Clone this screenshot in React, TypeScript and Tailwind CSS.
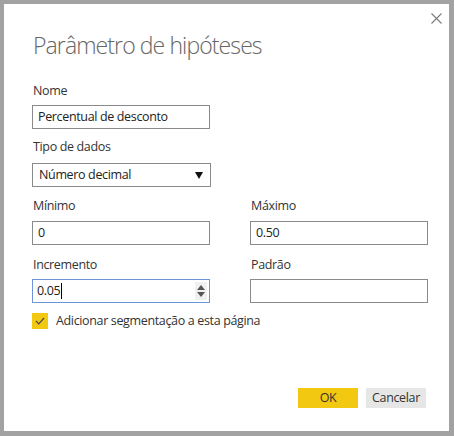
import React from "react";

const font = { fontFamily: '"Open Sans", "Noto Sans", sans-serif' };

function Label({ children, className = "" }: { children: React.ReactNode; className?: string }) {
  return (
    <div className={`text-[12.5px] leading-[16px] tracking-[-0.35px] text-[#333333] ${className}`}>{children}</div>
  );
}

const box = "h-[24px] border border-[#8a8a8a] flex items-center text-[12.5px] tracking-[-0.35px] text-[#222222]";

export default function App() {
  return (
    <div
      className="w-[454px] h-[436px] bg-[#a2a2a2] pt-[4px] pl-[4px] pr-[5px] pb-[5px]"
      style={font}
    >
      <div className="relative w-full h-full bg-white flex flex-col pl-[28px] pr-[23px]">
        <button className="absolute right-[7px] top-[8px] w-[12px] h-[12px] flex items-center justify-center">
          <svg width="11" height="11" viewBox="0 0 11 11">
            <path d="M0.5 0.5 L10.5 10.5 M10.5 0.5 L0.5 10.5" stroke="#7a7a7a" strokeWidth="1.1" />
          </svg>
        </button>

        <h1 className="mt-[25px] text-[23px] leading-[32px] tracking-[-0.9px] font-light text-[#666666] ml-[1px]">
          Parâmetro de hipóteses
        </h1>

        <Label className="mt-[22px] ml-[1px]">Nome</Label>
        <div className={`mt-[6px] w-[178px] px-[5px] ${box}`}>Percentual de desconto</div>

        <Label className="mt-[10px] ml-[1px]">Tipo de dados</Label>
        <div className={`mt-[8px] w-[179px] justify-between pl-[6px] pr-[7px] ${box}`}>
          <span>Número decimal</span>
          <svg width="8" height="7" viewBox="0 0 8 7">
            <path d="M0 0 H8 L4 7 Z" fill="#111111" />
          </svg>
        </div>

        <div className="mt-[11px] flex gap-[40px]">
          <div className="flex flex-col">
            <Label className="ml-[1px]">Mínimo</Label>
            <div className={`mt-[7px] w-[178px] px-[5px] ${box}`}>0</div>
          </div>
          <div className="flex flex-col">
            <Label className="ml-[1px]">Máximo</Label>
            <div className={`mt-[7px] w-[178px] px-[5px] ${box}`}>0.50</div>
          </div>
        </div>

        <div className="mt-[12px] flex gap-[40px]">
          <div className="flex flex-col">
            <Label className="ml-[1px]">Incremento</Label>
            <div className="mt-[6px] w-[178px] h-[24px] border border-[#6e95d8] flex items-center justify-between pl-[4px] pr-[2px] text-[12.5px] tracking-[-0.35px] text-[#222222]">
              <span className="flex items-center">
                0.05<span className="inline-block w-[1px] h-[16px] bg-black ml-[1px]" />
              </span>
              <div className="w-[12px] h-[18px] bg-[#f0f0f0] flex flex-col items-center justify-center gap-[2px]">
                <svg width="8" height="5" viewBox="0 0 8 5">
                  <path d="M0 5 L4 0 L8 5 Z" fill="#555555" />
                </svg>
                <svg width="8" height="5" viewBox="0 0 8 5">
                  <path d="M0 0 H8 L4 5 Z" fill="#555555" />
                </svg>
              </div>
            </div>
          </div>
          <div className="flex flex-col">
            <Label className="ml-[1px]">Padrão</Label>
            <div className="mt-[6px] w-[178px] h-[24px] border border-[#8a8a8a]" />
          </div>
        </div>

        <div className="mt-[10px] flex items-center gap-[8px]">
          <div className="w-[16px] h-[16px] bg-[#f2c811] flex items-center justify-center">
            <svg width="10" height="8" viewBox="0 0 10 8">
              <path d="M1 4 L3.8 6.8 L9 1" stroke="#4a4a4a" strokeWidth="1.2" fill="none" />
            </svg>
          </div>
          <span className="text-[12.5px] leading-[16px] tracking-[-0.35px] text-[#333333]">
            Adicionar segmentação a esta página
          </span>
        </div>

        <div className="mt-auto mb-[23px] flex justify-end gap-[8px]">
          <button className="w-[60px] h-[20px] bg-[#f2c811] text-[12.5px] tracking-[-0.35px] leading-[20px] text-[#333333]">
            OK
          </button>
          <button className="w-[60px] h-[20px] bg-[#e6e6e6] text-[12.5px] tracking-[-0.35px] leading-[20px] text-[#333333]">
            Cancelar
          </button>
        </div>
      </div>
    </div>
  );
}
